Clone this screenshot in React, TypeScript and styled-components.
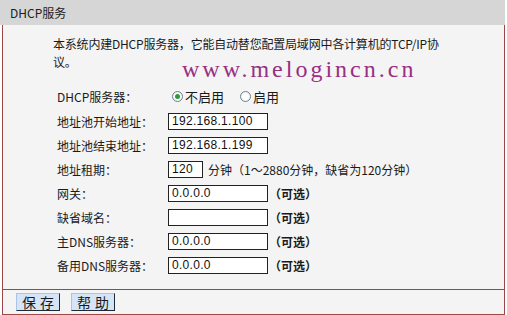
import React from 'react';
import styled, { createGlobalStyle } from 'styled-components';

const GlobalStyle = createGlobalStyle`
  html, body {
    margin: 0;
    padding: 0;
    background: #ffffff;
  }
  body {
    font-family: "Noto Sans CJK SC", "DejaVu Sans", sans-serif;
    font-size: 12px;
    color: #1a1a1a;
  }
`;

const Page = styled.div`
  width: 507px;
  height: 315px;
  position: relative;
`;

const Header = styled.div`
  width: 505px;
  height: 25px;
  background: #d6d6d6;
  display: flex;
  align-items: center;
  padding-left: 10px;
  box-sizing: border-box;
  font-size: 12px;
  line-height: 12px;
  color: #202020;
`;

const Panel = styled.div`
  margin-left: 2px;
  width: 503px;
  box-sizing: border-box;
  border-left: 1px solid #9c4646;
  border-right: 1px solid #9c4646;
  background: #f4f4f4;
`;

const Body = styled.div`
  padding: 10px 0 12px 50px;
  position: relative;
`;

const Intro = styled.p`
  margin: 0;
  line-height: 18px;
  white-space: nowrap;
  font-size: 12px;
  letter-spacing: -0.2px;
`;

const Watermark = styled.div`
  position: absolute;
  left: 179px;
  top: 31px;
  font-family: "Liberation Serif", "Times New Roman", serif;
  font-size: 24px;
  line-height: 26px;
  letter-spacing: 3px;
  color: #982f83;
  white-space: nowrap;
`;

const Form = styled.div`
  margin-top: 14px;
  display: grid;
  grid-template-columns: 111px auto;
  grid-auto-rows: 24px;
  padding-left: 4px;
`;

const Label = styled.div<{ first?: boolean }>`
  display: flex;
  align-items: center;
  height: ${p => (p.first ? '22px' : '24px')};
  white-space: nowrap;
`;

const Field = styled.div<{ first?: boolean }>`
  display: flex;
  align-items: center;
  height: ${p => (p.first ? '22px' : '24px')};
  white-space: nowrap;
`;

const Input = styled.div<{ w: number }>`
  width: ${p => p.w}px;
  height: 17px;
  box-sizing: border-box;
  border: 1px solid #222;
  background: #ffffff;
  font-family: "Liberation Sans", Arial, sans-serif;
  font-size: 12px;
  line-height: 15px;
  padding-left: 3px;
  letter-spacing: 0.3px;
  color: #111;
`;

const Optional = styled.span`
  font-weight: bold;
  margin-left: 1px;
  font-size: 12px;
`;

const Hint = styled.span`
  margin-left: 5px;
  font-size: 12px;
`;

const RadioGroup = styled.label`
  display: flex;
  align-items: center;
  margin-left: 4px;
  margin-right: 12px;
  font-size: 13px;
`;

const RadioDot = styled.span<{ checked?: boolean }>`
  width: 11px;
  height: 11px;
  box-sizing: border-box;
  border-radius: 50%;
  border: 1px solid #6f7f90;
  background: radial-gradient(circle, #ffffff 40%, #e4e8ee 100%);
  display: inline-flex;
  align-items: center;
  justify-content: center;
  margin-right: 2px;
  &::after {
    content: '';
    width: 5px;
    height: 5px;
    border-radius: 50%;
    background: ${p => (p.checked ? '#2f9a3c' : 'transparent')};
  }
`;

const Footer = styled.div`
  margin-left: 2px;
  width: 503px;
  height: 26px;
  box-sizing: border-box;
  border: 1px solid #9c4646;
  background: #f4f4f4;
  display: flex;
  align-items: center;
  gap: 11px;
  padding-left: 13px;
`;

const Button = styled.div`
  width: 44px;
  height: 18px;
  box-sizing: border-box;
  background: #d5e5f7;
  border: 1px solid;
  border-color: #a9c4e4 #1e2a36 #1e2a36 #a9c4e4;
  display: flex;
  align-items: center;
  justify-content: center;
  font-size: 14px;
  letter-spacing: 4px;
  padding-left: 4px;
  color: #1a1a1a;
`;

const rows: { label: string; value?: string; w?: number; optional?: boolean; hint?: string }[] = [
  { label: '地址池开始地址：', value: '192.168.1.100', w: 100 },
  { label: '地址池结束地址：', value: '192.168.1.199', w: 100 },
  { label: '地址租期：', value: '120', w: 35, hint: '分钟（1～2880分钟，缺省为120分钟）' },
  { label: '网关：', value: '0.0.0.0', w: 100, optional: true },
  { label: '缺省域名：', value: '', w: 100, optional: true },
  { label: '主DNS服务器：', value: '0.0.0.0', w: 100, optional: true },
  { label: '备用DNS服务器：', value: '0.0.0.0', w: 100, optional: true },
];

export default function App() {
  return (
    <Page>
      <GlobalStyle />
      <Header>DHCP服务</Header>
      <Panel>
        <Body>
          <Intro>
            本系统内建DHCP服务器，它能自动替您配置局域网中各计算机的TCP/IP协
            <br />
            议。
          </Intro>
          <Watermark>www.melogincn.cn</Watermark>
          <Form>
            <Label first>DHCP服务器：</Label>
            <Field first>
              <RadioGroup>
                <RadioDot checked />
                不启用
              </RadioGroup>
              <RadioGroup>
                <RadioDot />
                启用
              </RadioGroup>
            </Field>
            {rows.map(r => (
              <React.Fragment key={r.label}>
                <Label>{r.label}</Label>
                <Field>
                  <Input w={r.w ?? 100}>{r.value}</Input>
                  {r.hint && <Hint>{r.hint}</Hint>}
                  {r.optional && <Optional>（可选）</Optional>}
                </Field>
              </React.Fragment>
            ))}
          </Form>
        </Body>
      </Panel>
      <Footer>
        <Button>保存</Button>
        <Button>帮助</Button>
      </Footer>
    </Page>
  );
}
